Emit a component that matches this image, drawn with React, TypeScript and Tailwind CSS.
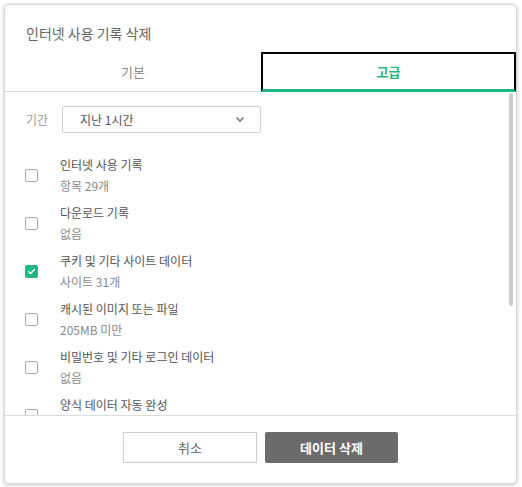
import React from "react";

const items = [
  { title: "인터넷 사용 기록", sub: "항목 29개", checked: false },
  { title: "다운로드 기록", sub: "없음", checked: false },
  { title: "쿠키 및 기타 사이트 데이터", sub: "사이트 31개", checked: true },
  { title: "캐시된 이미지 또는 파일", sub: "205MB 미만", checked: false },
  { title: "비밀번호 및 기타 로그인 데이터", sub: "없음", checked: false },
  { title: "양식 데이터 자동 완성", sub: "없음", checked: false },
];

function Checkbox({ checked }: { checked: boolean }) {
  if (checked) {
    return (
      <div className="w-[13px] h-[13px] rounded-[2px] bg-[#1fb980] flex items-center justify-center shrink-0">
        <svg width="9" height="9" viewBox="0 0 10 10">
          <path d="M1.8 5.2 L4 7.3 L8.2 2.8" fill="none" stroke="#fff" strokeWidth="1.6" strokeLinecap="round" strokeLinejoin="round" />
        </svg>
      </div>
    );
  }
  return <div className="w-[13px] h-[13px] rounded-[2px] border border-[#a9a9a9] bg-white shrink-0" />;
}

export default function App() {
  return (
    <div
      className="w-[522px] h-[487px] bg-white pl-[4px] pt-[4px]"
      style={{ fontFamily: '"Noto Sans CJK KR", "Noto Sans", sans-serif' }}
    >
      <div className="w-[513px] h-[480px] rounded-[4px] border border-[#d6d6d6] shadow-[0_1px_4px_rgba(0,0,0,0.22)] bg-white flex flex-col overflow-hidden">
        {/* header */}
        <div className="h-[47px] pt-[19px] pl-[21px]">
          <div className="text-[14px] leading-[18px] text-[#666]">인터넷 사용 기록 삭제</div>
        </div>
        {/* tabs */}
        <div className="flex h-[40px]">
          <div className="w-[256px] border-b border-[#dcdcdc] flex items-center justify-center text-[13px] text-[#8a8a8a]">
            기본
          </div>
          <div className="flex-1 border-t-2 border-x-2 border-black border-b-[3px] border-b-[#1fb980] flex items-center justify-center text-[13px] font-bold text-[#1fb980]">
            고급
          </div>
        </div>
        {/* content */}
        <div className="relative flex-1 overflow-hidden">
          <div className="absolute right-[3px] top-[1px] w-[4px] h-[213px] rounded-full bg-[#cbcbcb]" />
          <div className="pt-[14px] pl-[21px] flex items-center h-[41px]">
            <div className="w-[36px] text-[12px] text-[#9a9a9a]">기간</div>
            <div className="w-[199px] h-[27px] border border-[#cfcfcf] rounded-[2px] flex items-center justify-between pl-[17px] pr-[15px]">
              <span className="text-[12px] text-[#555]">지난 1시간</span>
              <svg width="10" height="7" viewBox="0 0 10 7">
                <path d="M1.5 1.5 L5 5 L8.5 1.5" fill="none" stroke="#777" strokeWidth="1.6" />
              </svg>
            </div>
          </div>
          <div className="pt-[22px] pl-[20px] flex flex-col gap-[7px]">
            {items.map((it) => (
              <div key={it.title} className="flex items-center gap-[22px]">
                <Checkbox checked={it.checked} />
                <div className="flex flex-col">
                  <div className="text-[12px] leading-[20px] text-[#555]">{it.title}</div>
                  <div className="text-[12px] leading-[21px] text-[#8a8a8a]">{it.sub}</div>
                </div>
              </div>
            ))}
          </div>
        </div>
        {/* footer */}
        <div className="h-[68px] border-t border-[#dcdcdc] pt-[16px] flex justify-center gap-[8px]">
          <button className="w-[134px] h-[31px] border border-[#cfcfcf] bg-white text-[13px] text-[#666]">
            취소
          </button>
          <button className="w-[133px] h-[31px] rounded-[2px] bg-[#6b6b6b] text-[13px] font-bold text-white">
            데이터 삭제
          </button>
        </div>
      </div>
    </div>
  );
}
